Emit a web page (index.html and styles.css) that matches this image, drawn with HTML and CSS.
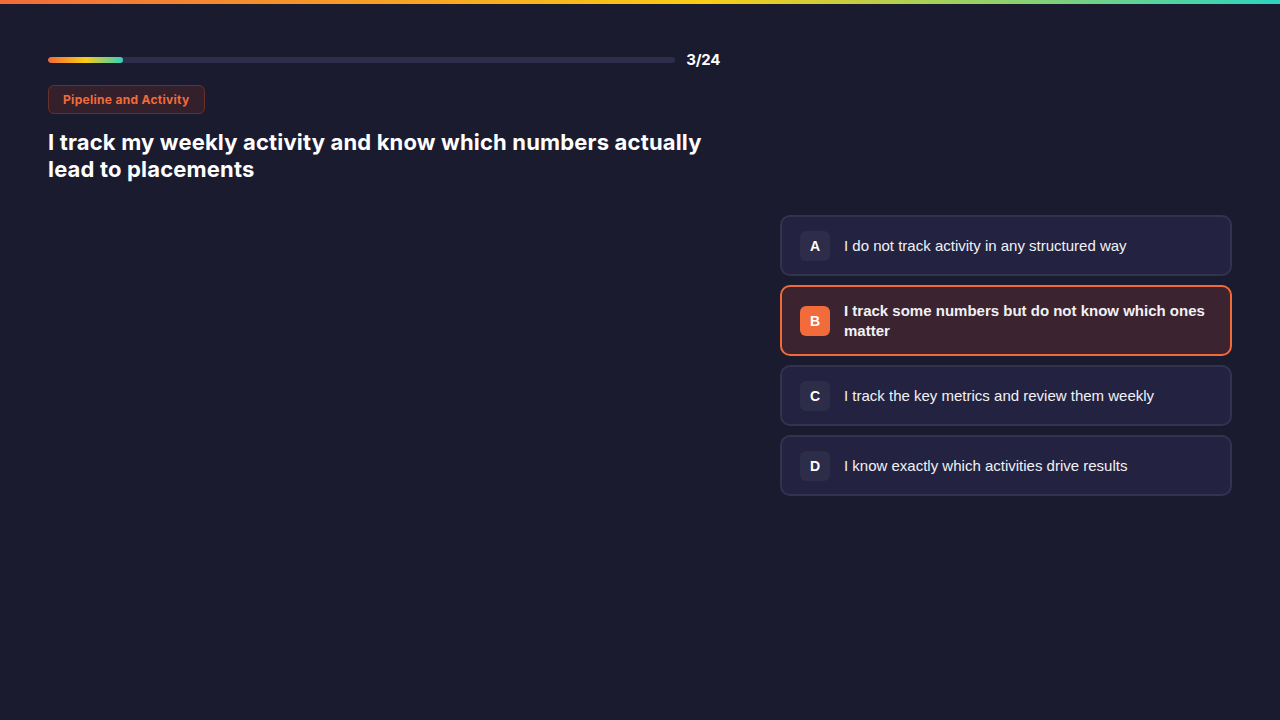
FILE: index.html
```html
<!DOCTYPE html>
<html lang="en">
<head>
<meta charset="utf-8">
<title>Quiz</title>
<link rel="stylesheet" href="styles.css">
</head>
<body>
<div class="topbar"></div>
<main class="page">
  <section class="left">
    <div class="progress-row">
      <div class="track"><div class="fill" style="width:12%"></div></div>
      <span class="count">3/24</span>
    </div>
    <span class="badge">Pipeline and Activity</span>
    <h1 class="question">I track my weekly activity and know which numbers actually lead to placements</h1>
  </section>
  <section class="right">
    <div class="option"><span class="letter">A</span><span class="label">I do not track activity in any structured way</span></div>
    <div class="option selected"><span class="letter">B</span><span class="label">I track some numbers but do not know which ones matter</span></div>
    <div class="option"><span class="letter">C</span><span class="label">I track the key metrics and review them weekly</span></div>
    <div class="option"><span class="letter">D</span><span class="label">I know exactly which activities drive results</span></div>
  </section>
</main>
</body>
</html>
```
FILE: styles.css
```css
* { box-sizing: border-box; }
html, body { margin: 0; height: 100%; }
body {
  background: #1b1b2f;
  color: #fff;
  font-family: "Liberation Sans", Arial, sans-serif;
}
.topbar {
  height: 4px;
  background: linear-gradient(90deg, #f26b3a 0%, #facc15 55%, #2dd4bf 100%);
}
.page {
  display: flex;
  gap: 60px;
  padding: 0 48px;
}
.left {
  width: 672px;
  padding-top: 51px;
}
.progress-row {
  display: flex;
  align-items: center;
  gap: 11px;
  height: 10px;
}
.track {
  flex: 1;
  height: 6px;
  border-radius: 3px;
  background: #2e2d4a;
  overflow: hidden;
}
.fill {
  height: 100%;
  border-radius: 3px;
  background: linear-gradient(90deg, #f26b3a, #facc15 50%, #2dd4bf);
}
.count {
  font-family: Inter, "Open Sans", sans-serif;
  font-weight: 700;
  font-size: 15px;
  letter-spacing: -0.3px;
  margin-top: -1px;
}
.badge {
  display: inline-block;
  margin-top: 20px;
  padding: 0 14px;
  height: 29px;
  line-height: 27px;
  border: 1px solid #6b2f2a;
  border-radius: 6px;
  background: #34202a;
  color: #f26b3a;
  font-family: Inter, "Open Sans", sans-serif;
  font-weight: 700;
  font-size: 12px;
  letter-spacing: 0.3px;
}
.question {
  margin: 15px 0 0;
  font-family: Inter, "Open Sans", sans-serif;
  font-weight: 700;
  font-size: 22px;
  line-height: 27px;
  letter-spacing: 0.17px;
}
.right {
  width: 452px;
  padding-top: 211px;
  display: flex;
  flex-direction: column;
  gap: 9px;
}
.option {
  display: flex;
  align-items: center;
  gap: 14px;
  padding: 14px 18px 13px;
  border: 2px solid #33324f;
  border-radius: 10px;
  background: #232240;
  font-size: 15px;
  line-height: 20px;
  color: #f1f1f5;
}
.letter {
  flex: none;
  width: 30px;
  height: 30px;
  border-radius: 6px;
  background: #2d2c49;
  display: flex;
  align-items: center;
  justify-content: center;
  font-weight: 700;
  font-size: 14px;
  color: #fff;
}
.option.selected {
  border-color: #f06a3a;
  background: #3b2430;
}
.option.selected .letter {
  background: #f26b3a;
}
.option.selected .label {
  font-weight: 700;
}
```
